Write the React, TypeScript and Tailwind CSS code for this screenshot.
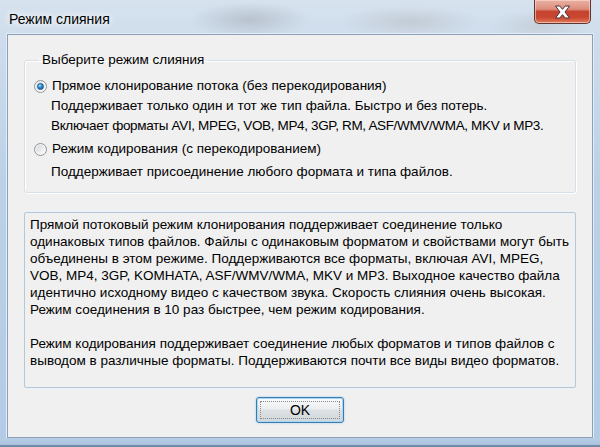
import React from "react";

function Radio({ checked }: { checked?: boolean }) {
  return (
    <div className="w-[13px] h-[13px] rounded-full border border-[#8f9599] bg-[linear-gradient(135deg,#cfd2d4_0%,#f4f4f4_70%,#ffffff_100%)] flex items-center justify-center shrink-0 shadow-[inset_0_0_0_1px_#f8f8f8]">
      {checked && (
        <div className="w-[7px] h-[7px] rounded-full bg-[radial-gradient(circle_at_35%_30%,#a9e2ff_0%,#2a8ad4_45%,#0d4f8f_100%)] border border-[#1c5a8e]" />
      )}
    </div>
  );
}

const textLines1 = [
  "Прямой потоковый режим клонирования поддерживает соединение только",
  "одинаковых типов файлов. Файлы с одинаковым форматом и свойствами могут быть",
  "объединены в этом режиме. Поддерживаются все форматы, включая AVI, MPEG,",
  "VOB, MP4, 3GP, KOMHATA, ASF/WMV/WMA, MKV и MP3. Выходное качество файла",
  "идентично исходному видео с качеством звука. Скорость слияния очень высокая.",
  "Режим соединения в 10 раз быстрее, чем режим кодирования.",
];
const textLines2 = [
  "Режим кодирования поддерживает соединение любых форматов и типов файлов с",
  "выводом в различные форматы. Поддерживаются почти все виды видео форматов.",
];

export default function App() {
  const font = { fontFamily: '"Liberation Sans", Arial, sans-serif' };
  return (
    <div
      className="w-[600px] h-[447px] overflow-hidden flex flex-col bg-[linear-gradient(180deg,#d6e2ee_0%,#cddcec_10%,#bcd1e7_40%,#b3cbe5_100%)] text-black"
      style={font}
    >
      {/* Title bar */}
      <div className="h-[34px] flex items-start justify-between shrink-0 bg-[radial-gradient(ellipse_60px_18px_at_250px_20px,#b9c3cf_0%,transparent_100%),radial-gradient(ellipse_70px_16px_at_410px_22px,#c3ccd6_0%,transparent_100%),radial-gradient(ellipse_50px_16px_at_540px_26px,#c6d0da_0%,transparent_100%)]">
        <div className="pl-[9px] pt-[10px] text-[14px] leading-[18px] [text-shadow:0_0_6px_#ffffff,0_0_10px_#ffffff]">
          Режим слияния
        </div>
        <div className="mr-[9px] w-[57px] h-[24px] rounded-b-[5px] border border-t-0 border-[#5e3633] bg-[linear-gradient(180deg,#eab2a5_0%,#dc8c7a_40%,#c64330_50%,#c9462f_75%,#e07a5c_100%)] flex items-center justify-center shadow-[inset_0_0_0_1px_rgba(255,220,210,0.6)]">
          <svg width="17" height="14" viewBox="0 0 17 14">
            <path
              d="M1.5 1 L5.8 1 L8.5 4.3 L11.2 1 L15.5 1 L11 7 L15.5 13 L11.2 13 L8.5 9.7 L5.8 13 L1.5 13 L6 7 Z"
              fill="#ffffff"
              stroke="#4a3030"
              strokeWidth="1"
              strokeLinejoin="round"
            />
          </svg>
        </div>
      </div>

      {/* Client area */}
      <div className="mx-[7px] h-[404px] shrink-0 border border-[#8aa0b8] bg-[#f0f0f0] shadow-[0_0_0_1px_#e4eef8] flex flex-col px-[16px] pt-[17px]">
        <fieldset className="border border-[#d5dfe5] rounded-[3px] shadow-[inset_1px_1px_0_#ffffff,1px_1px_0_#ffffff] h-[141px] px-[9px] pb-0">
          <legend className="ml-[5px] px-[3px] text-[13.5px] leading-[16px]">Выберите режим слияния</legend>
          <div className="pt-[8px] text-[13.5px] whitespace-nowrap">
            <div className="flex items-center gap-[5px] h-[20px]">
              <Radio checked />
              <span>Прямое клонирование потока (без перекодирования)</span>
            </div>
            <div className="pl-[17px] leading-[20px]">
              Поддерживает только один и тот же тип файла. Быстро и без потерь.
            </div>
            <div className="pl-[17px] leading-[20px] tracking-[-0.35px]">
              Включает форматы AVI, MPEG, VOB, MP4, 3GP, RM, ASF/WMV/WMA, MKV и MP3.
            </div>
            <div className="flex items-center gap-[5px] h-[20px] mt-[3px]">
              <Radio />
              <span>Режим кодирования (с перекодированием)</span>
            </div>
            <div className="pl-[17px] leading-[20px] mt-[3px]">
              Поддерживает присоединение любого формата и типа файлов.
            </div>
          </div>
        </fieldset>

        <div className="mt-[19px] h-[176px] border border-[#b3c8da] rounded-[2px] bg-[#f0f0f0] px-[5px] pt-[3px] text-[13.5px] leading-[17px] whitespace-nowrap">
          {textLines1.map((l) => (
            <div key={l}>{l}</div>
          ))}
          <div className="h-[17px]" />
          {textLines2.map((l) => (
            <div key={l}>{l}</div>
          ))}
        </div>

        <div className="flex justify-center mt-[9px]">
          <button className="w-[88px] h-[26px] rounded-[3px] border border-[#3d7bad] bg-[linear-gradient(180deg,#f7f9fa_0%,#eceff1_45%,#dde1e4_50%,#d2d7db_100%)] shadow-[inset_0_0_0_1px_#a8d8f4,0_0_2px_#7fc6ef] flex items-center justify-center p-[3px]">
            <div className="w-full h-full border border-dotted border-[#8a8a8a] flex items-center justify-center text-[14px] leading-none">
              OK
            </div>
          </button>
        </div>
      </div>
      <div className="flex-1 border-b-2 border-[#6f8aa6] bg-[linear-gradient(180deg,#b9cfe6_0%,#a9c1dc_100%)]" />
    </div>
  );
}
